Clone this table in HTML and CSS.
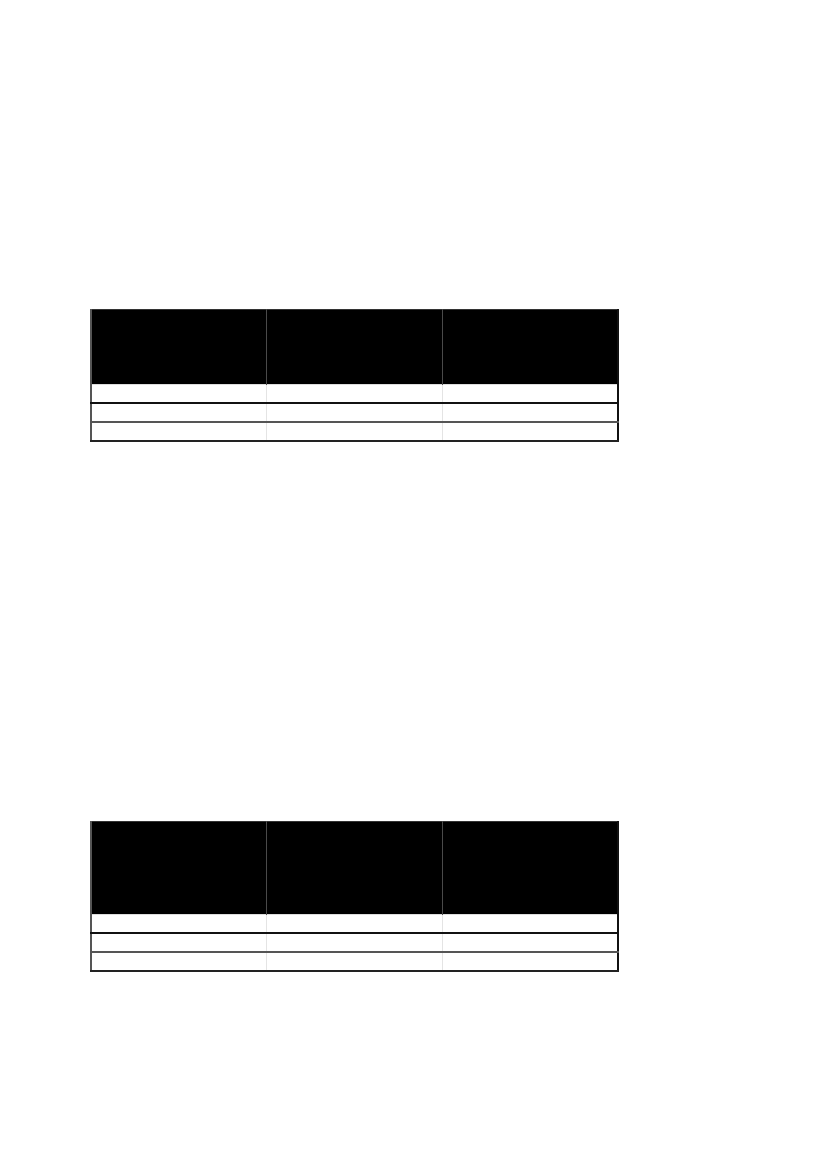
FILE: index.html
```html
<!DOCTYPE html>
<html lang="en">
<head>
<meta charset="utf-8">
<title>Tables</title>
<link rel="stylesheet" href="styles.css">
</head>
<body>
<main class="page">
  <table class="grid grid-first">
    <thead>
      <tr class="head head-short"><th></th><th></th><th></th></tr>
    </thead>
    <tbody>
      <tr><td></td><td></td><td></td></tr>
      <tr><td></td><td></td><td></td></tr>
      <tr><td></td><td></td><td></td></tr>
    </tbody>
  </table>
  <table class="grid grid-second">
    <thead>
      <tr class="head head-tall"><th></th><th></th><th></th></tr>
    </thead>
    <tbody>
      <tr><td></td><td></td><td></td></tr>
      <tr><td></td><td></td><td></td></tr>
      <tr><td></td><td></td><td></td></tr>
    </tbody>
  </table>
</main>
</body>
</html>
```
FILE: styles.css
```css
html, body {
  margin: 0;
  padding: 0;
  background: #ffffff;
  font-family: "Liberation Sans", Arial, sans-serif;
}
.page {
  display: flex;
  flex-direction: column;
  align-items: flex-start;
  padding: 309px 0 0 90px;
}
.grid {
  width: 529px;
  border-collapse: collapse;
  table-layout: fixed;
  border-left: 2px solid #555;
  border-right: 2px solid #111;
  border-top: 1px solid #333;
}
.grid-second {
  margin-top: 379px;
}
.grid th {
  background: #000;
  border-left: 1px solid #4a4a4a;
  padding: 0;
}
.grid th:first-child {
  border-left: none;
}
.head-short th { height: 74px; }
.head-tall th { height: 92px; }
.grid td {
  height: 17px;
  padding: 0;
  border-top: 2px solid #111;
  border-left: 1px solid #e4e4e4;
}
.grid td:first-child { border-left: none; }
.grid tbody tr:first-child td { border-top: 1px solid #ddd; }
.grid tbody tr:nth-child(3) td { border-top: 2px solid #555; }
.grid tbody tr:last-child td { border-bottom: 2px solid #222; }
```
